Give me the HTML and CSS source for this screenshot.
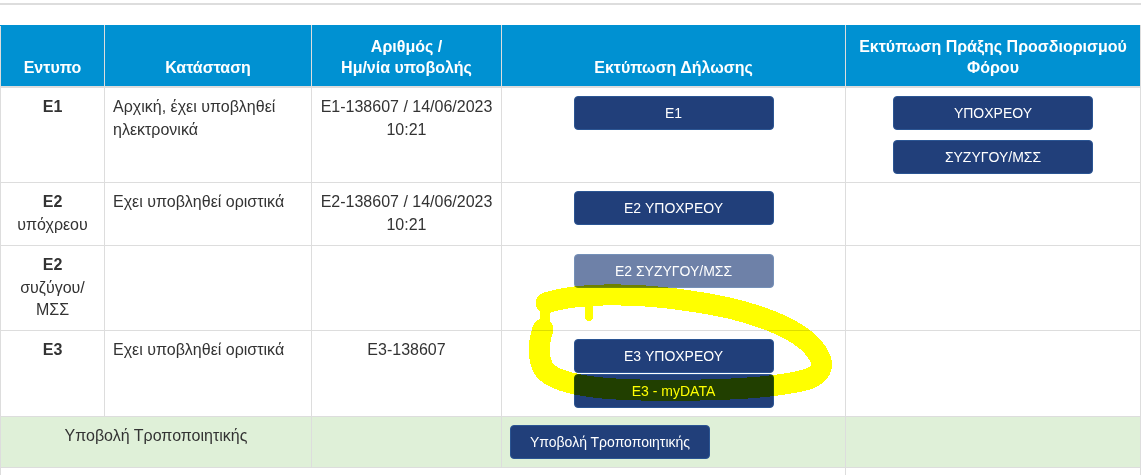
FILE: index.html
```html
<!DOCTYPE html>
<html lang="el">
<head>
    <meta charset="UTF-8">
    <meta name="viewport" content="width=device-width, initial-scale=1.0">
    <title>Δηλώσεις</title>
    <link rel="stylesheet" href="styles.css">
</head>
<body>
    <div class="page">
        <hr class="top-rule">

        <table class="forms-table">
            <colgroup>
                <col class="col-form">
                <col class="col-status">
                <col class="col-number">
                <col class="col-print">
                <col class="col-act">
            </colgroup>
            <thead>
                <tr>
                    <th>Εντυπο</th>
                    <th>Κατάσταση</th>
                    <th>Αριθμός /<br>Ημ/νία υποβολής</th>
                    <th>Εκτύπωση Δήλωσης</th>
                    <th>Εκτύπωση Πράξης Προσδιορισμού Φόρου</th>
                </tr>
            </thead>
            <tbody>
                <tr>
                    <td class="cell-form"><b>E1</b></td>
                    <td>Αρχική, έχει υποβληθεί ηλεκτρονικά</td>
                    <td class="cell-center">E1-138607 / 14/06/2023 10:21</td>
                    <td class="cell-center">
                        <button type="button" class="btn">E1</button>
                    </td>
                    <td class="cell-center">
                        <div class="btn-stack">
                            <button type="button" class="btn">ΥΠΟΧΡΕΟΥ</button>
                            <button type="button" class="btn">ΣΥΖΥΓΟΥ/ΜΣΣ</button>
                        </div>
                    </td>
                </tr>
                <tr>
                    <td class="cell-form"><b>E2</b><br>υπόχρεου</td>
                    <td>Εχει υποβληθεί οριστικά</td>
                    <td class="cell-center">E2-138607 / 14/06/2023 10:21</td>
                    <td class="cell-center">
                        <button type="button" class="btn">E2 ΥΠΟΧΡΕΟΥ</button>
                    </td>
                    <td></td>
                </tr>
                <tr>
                    <td class="cell-form"><b>E2</b><br>συζύγου/<wbr>ΜΣΣ</td>
                    <td></td>
                    <td></td>
                    <td class="cell-center">
                        <button type="button" class="btn disabled">E2 ΣΥΖΥΓΟΥ/ΜΣΣ</button>
                    </td>
                    <td></td>
                </tr>
                <tr>
                    <td class="cell-form"><b>E3</b></td>
                    <td>Εχει υποβληθεί οριστικά</td>
                    <td class="cell-center">E3-138607</td>
                    <td class="cell-center">
                        <div class="btn-stack tight">
                            <button type="button" class="btn">E3 ΥΠΟΧΡΕΟΥ</button>
                            <button type="button" class="btn">E3 - myDATA</button>
                        </div>
                    </td>
                    <td></td>
                </tr>
                <tr class="row-success">
                    <td colspan="2" class="cell-center">Υποβολή Τροποποιητικής</td>
                    <td></td>
                    <td>
                        <button type="button" class="btn btn-left">Υποβολή Τροποποιητικής</button>
                    </td>
                    <td></td>
                </tr>
                <tr>
                    <td colspan="4"></td>
                    <td></td>
                </tr>
            </tbody>
        </table>

        <!-- marker stroke drawn over the E3 buttons -->
        <svg class="marker" width="1144" height="475" viewBox="0 0 1144 475">
            <g fill="none" stroke="#ffff00" stroke-linecap="round" stroke-linejoin="round" shape-rendering="crispEdges">
                <path stroke-width="21" d="M 546 300 C 580 289, 640 290, 690 298 C 750 306, 800 325, 816 348 C 826 362, 822 372, 805 377 C 770 386, 700 388, 640 387 C 590 386, 553 380, 543 365 C 537 352, 539 338, 543 326"/>
                <path stroke-width="10" d="M 544 326 L 546 298"/>
                <path stroke-width="8" d="M 589 314 L 589 300"/>
            </g>
        </svg>
    </div>
</body>
</html>
```

FILE: styles.css
```css
body {
    margin: 0;
    padding: 0;
    background: #fff;
    color: #333;
    font-family: "Liberation Sans", Arial, sans-serif;
    font-size: 16px;
    line-height: 1.42857;
}

.page {
    position: relative;
    width: 1141px;
}

.top-rule {
    margin: 3px 0 0;
    height: 0;
    border: 0;
    border-top: 2px solid #ddd;
}

.forms-table {
    margin-top: 20px;
    width: 1141px;
    table-layout: fixed;
    border-collapse: collapse;
    border: 1px solid #ddd;
}

.col-form { width: 104px; }
.col-status { width: 207px; }
.col-number { width: 190px; }
.col-print { width: 344px; }
.col-act { width: 295px; }

.forms-table th {
    background: #0091d2;
    color: #fff;
    font-weight: bold;
    line-height: 21px;
    padding: 10px 8px 8px;
    text-align: center;
    vertical-align: bottom;
    border: 1px solid #ddd;
    border-top-color: #0091d2;
    border-bottom-width: 2px;
}

.forms-table td {
    padding: 8px;
    vertical-align: top;
    border: 1px solid #ddd;
}

.cell-form,
.cell-center {
    text-align: center;
}

.row-success td {
    background: #dff0d8;
}

.btn {
    display: block;
    box-sizing: border-box;
    width: 200px;
    margin: 0 auto;
    padding: 6px 12px;
    background: #213f7a;
    border: 1px solid #2b5593;
    border-radius: 4px;
    color: #fff;
    font-family: "Liberation Sans", Arial, sans-serif;
    font-size: 14px;
    line-height: 20px;
    text-align: center;
    cursor: pointer;
}

.btn.disabled {
    opacity: 0.65;
    cursor: not-allowed;
}

.btn-left {
    margin: 0;
}

.btn-stack {
    display: flex;
    flex-direction: column;
    gap: 10px;
}

.btn-stack.tight {
    gap: 1px;
}

.marker {
    position: absolute;
    top: 0;
    left: 0;
    pointer-events: none;
    mix-blend-mode: multiply;
}
```
